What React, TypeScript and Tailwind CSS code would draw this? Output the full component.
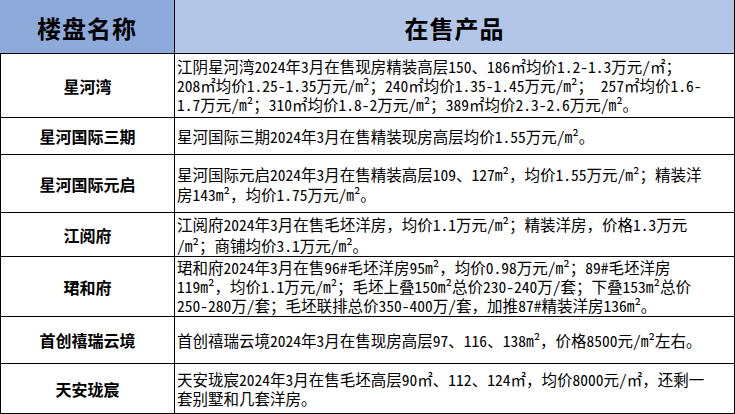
import React from "react";

type Row = { name: string; h: string; lead: string; lines: string[] };

const rows: Row[] = [
  {
    name: "星河湾",
    h: "h-[64px]",
    lead: "leading-[19px]",
    lines: [
      "江阴星河湾2024年3月在售现房精装高层150、186㎡均价1.2-1.3万元/㎡；",
      "208㎡均价1.25-1.35万元/m²；240㎡均价1.35-1.45万元/m²； 257㎡均价1.6-",
      "1.7万元/m²；310㎡均价1.8-2万元/m²；389㎡均价2.3-2.6万元/m²。",
    ],
  },
  {
    name: "星河国际三期",
    h: "h-[37px]",
    lead: "leading-[19px]",
    lines: ["星河国际三期2024年3月在售精装现房高层均价1.55万元/m²。"],
  },
  {
    name: "星河国际元启",
    h: "h-[58px]",
    lead: "leading-[20px]",
    lines: [
      "星河国际元启2024年3月在售精装高层109、127m²，均价1.55万元/m²；精装洋",
      "房143m²，均价1.75万元/m²。",
    ],
  },
  {
    name: "江阅府",
    h: "h-[44px]",
    lead: "leading-[21px]",
    lines: [
      "江阅府2024年3月在售毛坯洋房，均价1.1万元/m²；精装洋房，价格1.3万元",
      "/m²；商铺均价3.1万元/m²。",
    ],
  },
  {
    name: "珺和府",
    h: "h-[60px]",
    lead: "leading-[19px]",
    lines: [
      "珺和府2024年3月在售96#毛坯洋房95m²，均价0.98万元/m²；89#毛坯洋房",
      "119m²，均价1.1万元/m²；毛坯上叠150m²总价230-240万/套；下叠153m²总价",
      "250-280万/套；毛坯联排总价350-400万/套，加推87#精装洋房136m²。",
    ],
  },
  {
    name: "首创禧瑞云境",
    h: "h-[47px]",
    lead: "leading-[19px]",
    lines: ["首创禧瑞云境2024年3月在售现房高层97、116、138m²，价格8500元/m²左右。"],
  },
  {
    name: "天安珑宸",
    h: "h-[50px]",
    lead: "leading-[19px]",
    lines: [
      "天安珑宸2024年3月在售毛坯高层90㎡、112、124㎡，均价8000元/㎡，还剩一",
      "套别墅和几套洋房。",
    ],
  },
];

function Line({ text }: { text: string }) {
  const parts = text.split(/([\x20-\x7E²]+)/).filter((p) => p.length > 0);
  return (
    <div>
      {parts.map((p, i) =>
        /^[\x20-\x7E²]+$/.test(p) ? (
          <span key={i} className="[font-feature-settings:'hwid'] whitespace-pre">
            {p}
          </span>
        ) : (
          <span key={i}>{p}</span>
        )
      )}
    </div>
  );
}

export default function App() {
  return (
    <div className="w-[735px] h-[414px] bg-white overflow-hidden text-black font-['Noto_Sans_CJK_SC',sans-serif]">
      <div className="flex h-[54px] border-b border-black">
        <div className="w-[175px] border-r border-black bg-[#8eaadb] flex items-center justify-center pt-[2px]">
          <span className="text-[24px] font-semibold tracking-[1px]">楼盘名称</span>
        </div>
        <div className="flex-1 border-r border-black bg-[#b4c6e7] flex items-center justify-center pt-[2px]">
          <span className="text-[24px] font-semibold tracking-[1px]">在售产品</span>
        </div>
      </div>
      <div className="border-l border-r border-black">
        {rows.map((r) => (
          <div key={r.name} className={`flex border-b border-black ${r.h}`}>
            <div className="w-[174px] shrink-0 border-r border-black flex items-center justify-center">
              <span className="text-[16px] font-bold">{r.name}</span>
            </div>
            <div
              className={`flex-1 flex flex-col justify-center pl-[2px] text-[15.5px] whitespace-nowrap ${r.lead}`}
            >
              {r.lines.map((l, i) => (
                <Line key={i} text={l} />
              ))}
            </div>
          </div>
        ))}
      </div>
    </div>
  );
}
